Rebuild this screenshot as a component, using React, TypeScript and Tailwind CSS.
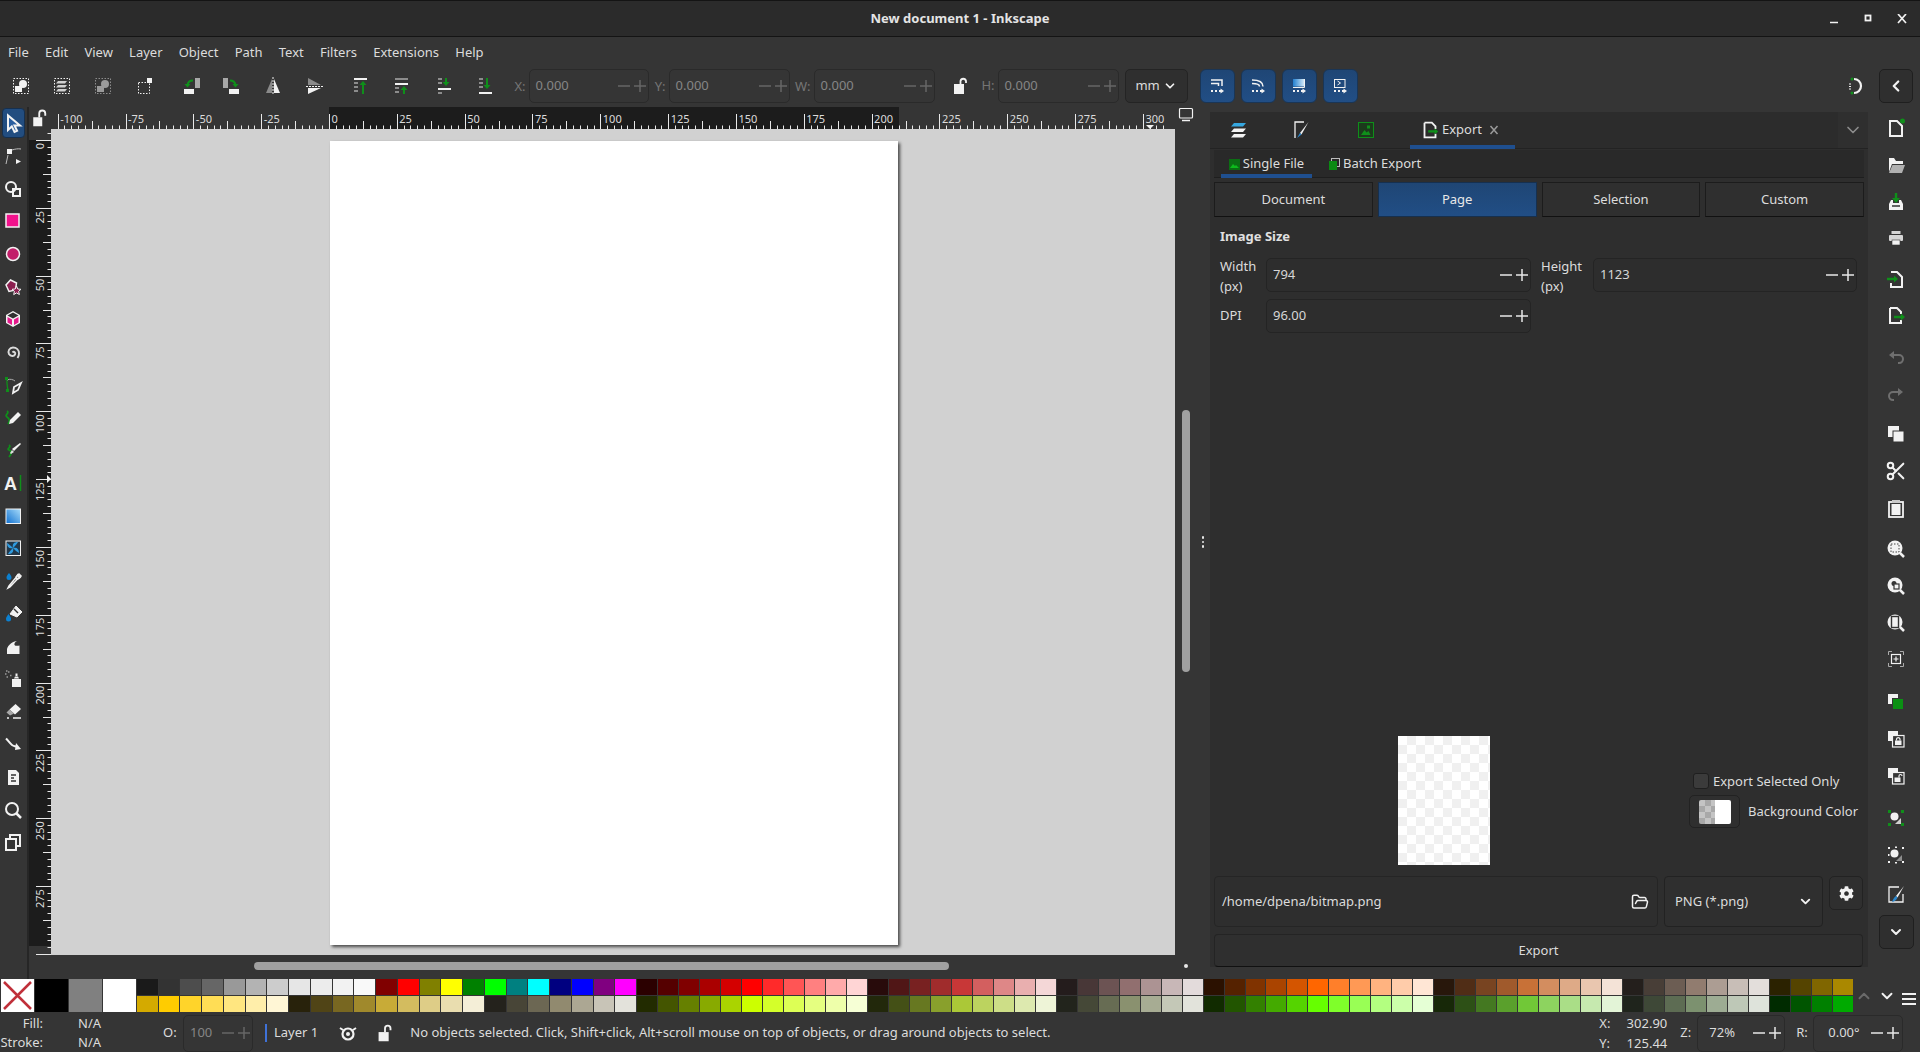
import type { ReactNode } from 'react';
import { ChevronDown, ChevronLeft, ChevronUp, FolderOpen, Scissors } from 'lucide-react';
import { FaCog } from 'react-icons/fa';

const G = '#0f8f1a';
const W = '#f2f2f2';

function Ico({ children, size = 24 }: { children: ReactNode; size?: number }) {
  return (
    <svg viewBox="0 0 24 24" width={size} height={size} className="shrink-0">
      {children}
    </svg>
  );
}

function Dotted({ x = 4.5, y = 4.5, w = 15, h = 15, c = W }: { x?: number; y?: number; w?: number; h?: number; c?: string }) {
  return <rect x={x} y={y} width={w} height={h} fill="none" stroke={c} strokeWidth="1" strokeDasharray="1.5 1.5" />;
}

function Doc({ c = W }: { c?: string }) {
  return <path d="M6 5h7l5 5v10H6z" fill="none" stroke={c} strokeWidth="2" strokeLinejoin="miter" />;
}

function Glass({ children }: { children?: ReactNode }) {
  return (
    <>
      <circle cx="11" cy="11" r="7.5" fill={W} />
      <path d="M16 16l4 4" stroke={W} strokeWidth="2.5" />
      {children}
    </>
  );
}

function SnapArrow() {
  return (
    <>
      <path d="M6 17h2M10 17h2M14 17h3" stroke={W} strokeWidth="2" />
      <path d="M15.500 14.500l3.500 2.500-3.500 2.500z" fill={W} />
    </>
  );
}

// top bar: selection and object commands
const commandIcons: { icon: ReactNode; cls: string }[] = [
  { cls: '', icon: <><Dotted /><circle cx="14" cy="10" r="4" fill={W} /><rect x="6" y="12" width="7" height="6" fill={W} /></> },
  { cls: '', icon: <><Dotted /><path d="M8 7h9l-2 2.5H6zM8 11h9l-2 2.5H6zM8 15h9l-2 2.5H6z" fill="#cfcfcf" /></> },
  { cls: '', icon: <><Dotted c="#8c8c8c" /><circle cx="14" cy="10" r="4" fill="#9a9a9a" /><rect x="6" y="12" width="7" height="6" fill="#9a9a9a" /></> },
  { cls: '', icon: <><Dotted x={5.5} y={8.5} w={11} h={11} /><rect x="14" y="4" width="5" height="5" fill={W} /></> },
  { cls: 'ml-[5px]', icon: <><rect x="5" y="15" width="10" height="5" fill={W} /><rect x="16" y="4" width="5" height="10" fill="#a8a8a8" /><path d="M14 6.500c-3 0-5 1.500-5.500 4.500" fill="none" stroke={G} strokeWidth="2" /><path d="M5.500 10h6l-3 3.500z" fill={G} /></> },
  { cls: '', icon: <><rect x="9" y="15" width="10" height="5" fill={W} /><rect x="3" y="4" width="5" height="10" fill="#a8a8a8" /><path d="M10 6.500c3 0 5 1.500 5.500 4.500" fill="none" stroke={G} strokeWidth="2" /><path d="M12.500 10h6l-3 3.500z" fill={G} /></> },
  { cls: '', icon: <><path d="M11 5v14H5z" fill="#8a8a8a" /><path d="M13 5v14h6z" fill={W} /><path d="M12 3v18" stroke={W} strokeWidth="1" strokeDasharray="2 1" /></> },
  { cls: '', icon: <><path d="M5 4l13 7H5z" fill="#8a8a8a" /><path d="M5 14h13L5 20z" fill={W} /><path d="M3 12.5h18" stroke={W} strokeWidth="1" strokeDasharray="2 1" /></> },
  { cls: 'ml-[5px]', icon: <><rect x="5" y="4" width="13" height="2" fill={W} /><path d="M5 9h4M5 13h4M5 17h4" stroke="#8c8c8c" strokeWidth="2" /><path d="M14 20V10" stroke={G} strokeWidth="2" /><path d="M10.5 11L14 7l3.5 4z" fill={G} /></> },
  { cls: '', icon: <><path d="M5 5h13M5 14h4M5 18h4" stroke="#8c8c8c" strokeWidth="2" /><rect x="5" y="9" width="13" height="2" fill={W} /><path d="M14 20v-5" stroke={G} strokeWidth="2" /><path d="M10.5 16l3.5-4 3.5 4z" fill={G} /></> },
  { cls: '', icon: <><path d="M6 5h4M6 9h4M6 19h4" stroke="#8c8c8c" strokeWidth="2" /><rect x="6" y="14" width="13" height="2" fill={W} /><path d="M14 4v5" stroke={G} strokeWidth="2" /><path d="M10.5 8l3.5 4 3.5-4z" fill={G} /></> },
  { cls: '', icon: <><path d="M6 5h4M6 9h4M6 13h4" stroke="#8c8c8c" strokeWidth="2" /><rect x="6" y="18" width="13" height="2" fill={W} /><path d="M14 4v8" stroke={G} strokeWidth="2" /><path d="M10.5 11l3.5 4 3.5-4z" fill={G} /></> },
];

const snapIcons: ReactNode[] = [
  <><path d="M6 6h11v6" fill="none" stroke={W} strokeWidth="1.500" /><path d="M6 9.500h7.500V12" fill="none" stroke={W} strokeWidth="1.500" /><SnapArrow /></>,
  <><path d="M6 6c6 0 11 1 11 6.500" fill="none" stroke={W} strokeWidth="1.500" /><path d="M6 9.500c4 0 7.500.5 7.500 3" fill="none" stroke={W} strokeWidth="1.500" /><SnapArrow /></>,
  <><defs><linearGradient id="snapfill" x1="0" y1="0" x2="1" y2="0"><stop offset="0" stopColor="#2280d0" /><stop offset="1" stopColor="#cfe6f7" /></linearGradient></defs><rect x="6" y="5" width="11" height="7.500" fill="url(#snapfill)" /><path d="M6 13.500h11.500V5" fill="none" stroke={W} strokeWidth="1" /><SnapArrow /></>,
  <><rect x="6.500" y="5.500" width="10.500" height="8" fill="none" stroke={W} strokeWidth="1" /><path d="M9.500 7l3 2-3 2" fill="none" stroke={W} strokeWidth="1" /><SnapArrow /></>,
];

const toolIcons: ReactNode[] = [
  <path d="M7 4.500V19l3.800-3.600L13.500 21l2.600-1.200-2.600-5.300H19z" fill="#2a5e9f" stroke={W} strokeWidth="2" />,
  <><rect x="6" y="5" width="5" height="5" fill={W} /><path d="M11 6c3-1 6-1.500 9-1M7 11l-2 9" fill="none" stroke="#bdbdbd" strokeWidth="1" /><path d="M15 15l5 2.500-5 2.500z" fill={W} /></>,
  <><circle cx="10" cy="10" r="5" fill="none" stroke={W} strokeWidth="2" /><rect x="12" y="12" width="7" height="7" fill="none" stroke={W} strokeWidth="2" /></>,
  <rect x="5" y="5" width="13" height="13" fill="#f2128c" stroke={W} strokeWidth="1.500" />,
  <circle cx="12" cy="12" r="6.500" fill="#c21f6a" stroke={W} strokeWidth="1.500" />,
  <><path d="M9.500 5l6 3-1 7-6.500 1.500L5 10z" fill="#8c1f50" stroke={W} strokeWidth="1.500" /><path d="M15.500 11l1.300 3 3.200.300-2.400 2.100.800 3.100-2.900-1.600-2.800 1.700.700-3.200-2.400-2.100 3.200-.300z" fill="#8c1f50" stroke={W} strokeWidth="1" /></>,
  <><path d="M12 4l7 4v8l-7 4-7-4V8z" fill={W} /><path d="M12 5.500L17.500 8.500 12 11.500 6.500 8.500z" fill="#303030" /><path d="M6.500 10l4.500 2.500v5.500l-4.500-2.500z" fill="#e6198c" /><path d="M17.500 10L13 12.500v5.500l4.500-2.500z" fill="#e6198c" /></>,
  <path d="M11.500 12.500c1.500-1.500 3.500 0 2.500 2-1 2-4.500 2-6-.500-1.500-3 .5-6.500 4-6.500 3.500 0 6 2.500 6 6 0 2-.5 3-1.500 4.500" fill="none" stroke="#dcdcdc" strokeWidth="1.900" />,
  <><path d="M6 6c-.5 4 .5 8 1 12" fill="none" stroke={G} strokeWidth="1.300" /><path d="M6 7c3-1.500 6-.5 8 1" fill="none" stroke="#aaa" strokeWidth="1" /><rect x="4" y="4" width="3" height="3" fill={G} /><rect x="5" y="16" width="3" height="3" fill={G} /><path d="M20 10l-3 7-5 3 1-6z" fill="none" stroke={W} strokeWidth="1.800" /></>,
  <><path d="M6 5c3 2-3 4 0 6s3 4 1 7" fill="none" stroke={G} strokeWidth="1.800" /><path d="M17 6l3 3-8 8-4 1 1-4z" fill={W} /></>,
  <><path d="M8 7c3 2-3 4 0 5s3 3 0 7" fill="none" stroke={G} strokeWidth="1.800" /><path d="M19 5l1 1-7 7-2-2z" fill={W} /><path d="M11 12l2 2-3 2-1-1z" fill="#ddd" /></>,
  <><text x="3" y="19" fontFamily="'Liberation Sans', sans-serif" fontWeight="700" fontSize="18" fill={W}>A</text><path d="M19.500 4v16" stroke={G} strokeWidth="1.500" /></>,
  <><defs><linearGradient id="grad1" x1="0" y1="1" x2="1" y2="0"><stop offset="0" stopColor="#0e6fd0" /><stop offset="1" stopColor="#a8dcfa" /></linearGradient></defs><rect x="5" y="5" width="14.500" height="14.500" fill="url(#grad1)" stroke={W} strokeWidth="1" /></>,
  <><rect x="5" y="5" width="14.500" height="14.500" fill="#22384a" stroke={W} strokeWidth="1" /><path d="M12 12c-1-4 1-6 5-6-1 2-3 4-5 6zM12 12c4-1 6 1 6 5-2-1-4-3-6-5zM12 12c1 4-1 6-5 6 1-2 3-4 5-6zM12 12c-4 1-6-1-6-5 2 1 4 3 6 5z" fill="#2f9bdf" /></>,
  <><path d="M8 4c-1.500 2-2.500 3-2.500 4.500a2.500 2.500 0 0 0 5 0C10.500 7 9.500 6 8 4z" fill="#0c80d0" /><path d="M18 5l2 2-3 3-2-2zM14.500 9l1.500 1.500-7 7.500-2 1 1-2z" fill="none" stroke={W} strokeWidth="1.500" /><path d="M16 5.500l3.500 3.500" stroke={W} strokeWidth="2.500" /></>,
  <><path d="M15 4l6 6-5 5-7-3z" fill={W} stroke={W} strokeWidth="1" /><path d="M13 7l4 4" stroke="#333" strokeWidth="1.500" /><path d="M7.500 12c-1.500 2-2.500 3.500-2.500 5a2.500 2.500 0 0 0 5 0c0-1.500-1-3-2.500-5z" fill="#0c80d0" /></>,
  <path d="M6 20v-5c1-4 6-8 10-8-2 1-3 2.500-2.500 4 .5 1 3 1 5 .5V20z" fill={W} />,
  <><rect x="11" y="12" width="9" height="8" fill={W} /><path d="M13 11.500h5l-1-2h-3zM14.500 9V6.500h2V9z" fill={W} /><path d="M4 7h1.500M7 5h1.500M5.500 10h1.500M9 8.500h1.500M5 4h1.500" stroke="#9a9a9a" strokeWidth="1.500" /></>,
  <><path d="M14.500 4l5.500 5-6 5.500-5.500-5z" fill={W} /><path d="M8.500 9.500l-3 3 3.500 3 4-2z" fill="#a8a8a8" /><path d="M6 18h2M12 18h8" stroke={W} strokeWidth="1.500" /></>,
  <><path d="M5 6.500c2 2 4 5 6 6.500 2 1.500 3 1 5 2" fill="none" stroke={W} strokeWidth="2" /><path d="M15 11l5 6-6 1z" fill={W} /></>,
  <><path d="M7 5h8l3 3v12H7z" fill={W} /><path d="M10 10h5M10 13h3M10 16h5" stroke="#333" strokeWidth="1.300" /></>,
  <><circle cx="11" cy="11" r="6" fill="none" stroke={W} strokeWidth="2" /><path d="M15.500 15.500l4.500 4.500" stroke={W} strokeWidth="2.500" /></>,
  <><rect x="5" y="9" width="10" height="11" fill="none" stroke={W} strokeWidth="2" /><path d="M9 8V5h10v11h-3" fill="none" stroke={W} strokeWidth="2" /></>,
];

const actionIcons: { icon: ReactNode; cls: string }[] = [
  { cls: '', icon: <><Doc /><circle cx="18.500" cy="5" r="2.500" fill={G} /></> },
  { cls: '', icon: <><path d="M5 19V5h5l2 3h7v3H8l-3 8z" fill={W} /><path d="M8.500 12H21l-3 8H5z" fill={W} opacity=".65" /></> },
  { cls: '', icon: <><path d="M5 14l2-4h2v3h6v-3h2l2 4v6H5z" fill={W} /><path d="M8 16h8" stroke="#333" strokeWidth="1.500" /><path d="M12 3v7" stroke={G} strokeWidth="2.500" /><path d="M8 8h8l-4 5z" fill={G} /></> },
  { cls: '', icon: <><rect x="7.500" y="5" width="9" height="3" fill="#d6d6d6" /><rect x="5" y="9" width="14" height="6" rx="1" fill="#d6d6d6" /><rect x="8" y="14" width="8" height="5" fill={W} stroke="#333" strokeWidth=".6" /></> },
  { cls: 'mt-[3.500px]', icon: <><path d="M7 5h6l5 5v10H7v-4" fill="none" stroke={W} strokeWidth="2" /><path d="M3 12h8" stroke={G} strokeWidth="2.500" /><path d="M10 8.500l4 3.500-4 3.500z" fill={G} /></> },
  { cls: '', icon: <><path d="M6 5h7l4 4v2M17 17v3H6V5" fill="none" stroke={W} strokeWidth="2" /><path d="M10 14h8" stroke={G} strokeWidth="2.500" /><path d="M17 10.500l4 3.500-4 3.500z" fill={G} /></> },
  { cls: 'mt-[5px]', icon: <><path d="M9 10h6a4 4 0 0 1 4 4c0 2-1.500 4-4 4h-1" fill="none" stroke="#6f6f6f" strokeWidth="2" /><path d="M10 6v8l-5-4z" fill="#6f6f6f" /></> },
  { cls: '', icon: <><path d="M15 10H9a4 4 0 0 0-4 4c0 2 1.500 4 4 4h1" fill="none" stroke="#6f6f6f" strokeWidth="2" /><path d="M14 6v8l5-4z" fill="#6f6f6f" /></> },
  { cls: 'mt-[4px]', icon: <><rect x="4" y="4" width="11" height="11" fill={W} /><rect x="9" y="9" width="11" height="11" fill={W} stroke="#353535" strokeWidth="1" /></> },
  { cls: '', icon: <Scissors size={22} x={1} y={1} color={W} strokeWidth={2.2} /> },
  { cls: '', icon: <><rect x="5" y="6" width="14" height="15" fill="none" stroke={W} strokeWidth="1.800" /><rect x="7.500" y="8" width="9" height="11" fill={W} /><rect x="8" y="4" width="8" height="3" fill="#c8c8c8" /></> },
  { cls: 'mt-[5px]', icon: <Glass><rect x="7" y="7" width="8" height="8" fill="none" stroke="#444" strokeDasharray="1.500 1.500" strokeWidth="1" /></Glass> },
  { cls: '', icon: <Glass><circle cx="10" cy="9.500" r="2.500" fill="#353535" /><rect x="10" y="10" width="5" height="5" fill={W} stroke="#353535" strokeWidth="1.200" /></Glass> },
  { cls: '', icon: <Glass><rect x="7.500" y="5.500" width="7" height="11" fill="none" stroke="#353535" strokeWidth="1.400" /></Glass> },
  { cls: '', icon: <><path d="M4.500 8V4.500H8M16 4.500h3.500V8M19.500 16v3.500H16M8 19.500H4.500V16" fill="none" stroke="#aaa" strokeWidth="1" /><rect x="7.500" y="7.500" width="9" height="9" fill="none" stroke={W} strokeWidth="1.200" /><path d="M12 9.500v5M9.500 12h5" stroke={W} strokeWidth="1.200" /></> },
  { cls: 'mt-[6px]', icon: <><rect x="4" y="4" width="10" height="10" fill={W} /><rect x="8.500" y="8.500" width="11" height="11" fill="#0b9013" stroke="#353535" strokeWidth="1" /></> },
  { cls: '', icon: <><rect x="4" y="4" width="10" height="10" fill={W} /><rect x="8.500" y="8.500" width="11.500" height="11.500" fill="#353535" stroke={W} strokeWidth="1.200" /><rect x="11" y="13.500" width="6.500" height="4.500" fill={W} /><path d="M12.500 13.500v-1.500a1.800 1.800 0 0 1 3.500 0v1.500" fill="none" stroke={W} strokeWidth="1.200" /></> },
  { cls: '', icon: <><rect x="4" y="4" width="10" height="10" fill={W} /><rect x="8.500" y="8.500" width="11.500" height="11.500" fill="#353535" stroke={W} strokeWidth="1.200" /><rect x="10.500" y="13.500" width="6" height="4.500" fill={W} /><path d="M15 13.500v-1.500a1.500 1.500 0 0 1 3 0" fill="none" stroke={W} strokeWidth="1.200" /></> },
  { cls: 'mt-[6px]', icon: <><path d="M4 4h3v3H4zM17 4h3v3h-3zM4 17h3v3H4zM17 17h3v3h-3z" fill={G} /><circle cx="10.500" cy="10.500" r="4" fill={W} /><path d="M11 18l6-6v6z" fill="#cfcfcf" /></> },
  { cls: '', icon: <><path d="M4 4h2v2H4zM18 4h2v2h-2zM4 18h2v2H4zM18 18h2v2h-2zM11 3.500h2v1.500h-2zM4 11h1.500v2H4zM11 19h2v1.500h-2z" fill={W} /><circle cx="10.500" cy="10.500" r="4" fill={W} /><path d="M12 18l6-6v6z" fill="#8e8e8e" /></> },
  { cls: 'mt-[2px]', icon: <><path d="M15 5H5v15h14v-8" fill="none" stroke={W} strokeWidth="1.300" /><path d="M20 4l-8 10 1.500 1.500z" fill={W} /><path d="M12 14c-1.500 1-3 3-4 6 2.500-.5 4.500-2 5.500-4.500z" fill="#2a88cf" /></> },
];

const paletteTop = ['#1a1a1a','#333333','#4d4d4d','#666666','#999999','#b3b3b3','#cccccc','#e6e6e6','#ececec','#f2f2f2','#f9f9f9','#800000','#ff0000','#808000','#ffff00','#008000','#00ff00','#008080','#00ffff','#000080','#0000ff','#800080','#ff00ff','#2b0000','#550000','#800000','#aa0000','#d40000','#ff0000','#ff2a2a','#ff5555','#ff8080','#ffaaaa','#ffd5d5','#280b0b','#501616','#782121','#a02c2c','#c83737','#d35f5f','#de8787','#e9afaf','#f4d7d7','#241c1c','#483737','#6c5353','#916f6f','#ac9393','#c8b7b7','#e3dbdb','#2b1100','#552200','#803300','#aa4400','#d45500','#ff6600','#ff7f2a','#ff9955','#ffb380','#ffccaa','#ffe6d5','#28170b','#502d16','#784421','#a05a2c','#c87137','#d38d5f','#deaa87','#e9c6af','#f4e3d7','#241f1c','#483e37','#6c5d53','#917c6f','#ac9d93','#c8beb7','#e3dedb','#2b2200','#554400','#806600','#aa8800'];
const paletteBottom = ['#d4aa00','#ffcc00','#ffd42a','#ffdd55','#ffe680','#ffeeaa','#fff6d5','#28220b','#504416','#786721','#a0892c','#c8ab37','#d3bc5f','#decd87','#e9ddaf','#f4eed7','#24221c','#484537','#6c6753','#918a6f','#aca793','#c8c4b7','#e3e2db','#222b00','#445500','#668000','#88aa00','#aad400','#ccff00','#d4ff2a','#ddff55','#e5ff80','#eeffaa','#f6ffd5','#22280b','#445016','#677821','#89a02c','#abc837','#bcd35f','#cdde87','#dde9af','#eef4d7','#22241c','#454837','#676c53','#8a916f','#a7ac93','#c4c8b7','#e2e3db','#112b00','#225500','#338000','#44aa00','#55d400','#66ff00','#7fff2a','#99ff55','#b3ff80','#ccffaa','#e5ffd5','#172808','#2d5016','#447821','#5aa02c','#71c837','#8dd35f','#aade87','#c6e9af','#e3f4d7','#1f241c','#3e4837','#5d6c53','#7c916f','#9dac93','#bec8b7','#dee3db','#002b00','#005500','#008000','#00aa00'];

const menus = ['File', 'Edit', 'View', 'Layer', 'Object', 'Path', 'Text', 'Filters', 'Extensions', 'Help'];

function PlusMinus({ dim = false }: { dim?: boolean }) {
  const c = dim ? '#666666' : '#e8e8e8';
  return (
    <svg width="30" height="14" viewBox="0 0 30 14" className="shrink-0">
      <path d="M1 7h12M17 7h12M23 1v12" stroke={c} strokeWidth="1.500" />
    </svg>
  );
}

function Spin({ value, className, dim = false }: { value: string; className: string; dim?: boolean }) {
  return (
    <div className={`flex items-center justify-between rounded-[5px] border pl-[6px] pr-[1px] ${dim ? 'border-[#2a2a2a] text-[#858585]' : 'border-[#242424] bg-[#2d2d2d] text-[#d6d6d6]'} ${className}`}>
      <span>{value}</span>
      <PlusMinus dim={dim} />
    </div>
  );
}

function BarLabel({ text, className }: { text: string; className: string }) {
  return <div className={`pr-[3px] text-right text-[#757575] ${className}`}>{text}</div>;
}

function HRuler() {
  const at = (v: number) => 329 + v * 2.713 - 51;
  const ticks: ReactNode[] = [];
  for (let v = -100; v <= 307.5; v += 2.5) {
    const len = v % 25 === 0 ? 15 : v % 12.5 === 0 ? 8 : 3.5;
    ticks.push(<path key={v} d={`M${Math.round(at(v)) + 0.5} 22v-${len}`} stroke="#e8e8e8" strokeWidth="1" />);
  }
  const labels = [];
  for (let v = -100; v <= 300; v += 25) labels.push(v);
  return (
    <svg width="1124" height="22" className="block shrink-0">
      <rect x="0" y="0" width="1124" height="22" fill="#353535" />
      <rect x="278" y="0" width="570" height="22" fill="#1c1c1c" />
      {ticks}
      {labels.map((v) => (
        <text key={v} x={at(v) + 2.500} y="16" fontSize="11" fill="#dcdcdc" fontFamily="'Noto Sans', sans-serif">{v}</text>
      ))}
      <path d="M1095 18h8l-4 4z" fill={W} />
    </svg>
  );
}

function VRuler() {
  const at = (v: number) => 11 + v * 2.713;
  const ticks: ReactNode[] = [];
  for (let v = -2.5; v <= 302.5; v += 2.5) {
    const len = v % 25 === 0 ? 15 : v % 12.5 === 0 ? 8 : 3.5;
    ticks.push(<path key={v} d={`M22 ${Math.round(at(v)) + 0.5}h-${len}`} stroke="#e8e8e8" strokeWidth="1" />);
  }
  const labels = [];
  for (let v = 0; v <= 300; v += 25) labels.push(v);
  return (
    <svg width="22" height="826" className="block shrink-0">
      <rect x="0" y="0" width="22" height="826" fill="#353535" />
      <rect x="0" y="11" width="22" height="806" fill="#1c1c1c" />
      {ticks}
      {labels.map((v) => (
        <text key={v} x="15" y={at(v) + 3} fontSize="11" fill="#dcdcdc" textAnchor="end" transform={`rotate(-90 15 ${at(v) + 3})`} fontFamily="'Noto Sans', sans-serif">{v}</text>
      ))}
      <path d="M18 346l4 4-4 4z" fill={W} />
    </svg>
  );
}

export default function App() {
  return (
    <div className="flex h-[1052px] w-[1920px] flex-col overflow-hidden bg-[#353535] text-[13px] text-[#dcdcdc] font-['Noto_Sans',sans-serif]">
      {/* title bar */}
      <div className="relative flex h-[37px] shrink-0 items-center justify-center border-y border-[#141414] bg-[#2b2b2b]">
        <span className="text-[13px] font-bold text-[#e4e4e4]">New document 1 - Inkscape</span>
        <div className="absolute right-[13px] top-[13px] flex items-start gap-[24px]">
          <svg width="10" height="10"><path d="M1 8.500h8" stroke={W} strokeWidth="1.500" /></svg>
          <svg width="10" height="10"><rect x="2.500" y="1.500" width="5" height="5" fill="none" stroke={W} strokeWidth="1.800" /></svg>
          <svg width="10" height="10"><path d="M1 0l8 9M9 0L1 9" stroke={W} strokeWidth="1.700" /></svg>
        </div>
      </div>

      {/* menu */}
      <div className="flex h-[31px] shrink-0 items-center gap-[16.200px] pl-[8px] pt-[1px]">
        {menus.map((m) => (
          <span key={m}>{m}</span>
        ))}
      </div>

      {/* command bar */}
      <div className="flex h-[39px] shrink-0 items-start pt-[1px]">
        {commandIcons.map((c, i) => (
          <div key={i} className={`flex h-[34px] w-[41.300px] items-center justify-center ${c.cls}`}>
            <Ico>{c.icon}</Ico>
          </div>
        ))}
        <BarLabel text="X:" className="h-[34px] w-[23px] leading-[34px]" />
        <Spin value="0.000" dim className="h-[34px] w-[120px]" />
        <BarLabel text="Y:" className="h-[34px] w-[20px] leading-[34px]" />
        <Spin value="0.000" dim className="h-[34px] w-[121px]" />
        <BarLabel text="W:" className="h-[34px] w-[24px] leading-[34px]" />
        <Spin value="0.000" dim className="h-[34px] w-[121px]" />
        <div className="flex h-[34px] w-[63px] items-center justify-between pl-[13px]">
          <svg width="24" height="24" viewBox="0 0 24 24">
            <rect x="6" y="10" width="10" height="10" fill={W} />
            <path d="M12.500 10V7a2.800 2.800 0 0 1 5.500 0v2" fill="none" stroke={W} strokeWidth="1.800" />
          </svg>
          <span className="pr-[3px] text-[#757575]">H:</span>
        </div>
        <Spin value="0.000" dim className="h-[34px] w-[121px]" />
        <div className="ml-[6px] flex h-[34px] w-[63px] items-center justify-center gap-[3px] rounded-[5px] border border-[#242424] bg-[#2f2f2f]">
          mm <ChevronDown size={14} strokeWidth={3} color={W} />
        </div>
        <div className="ml-[12px] flex gap-[6px]">
          {snapIcons.map((s, i) => (
            <div key={i} className="flex h-[34px] w-[35px] items-center justify-center rounded-[6px] border border-[#1a3555] bg-gradient-to-b from-[#1f4675] to-[#214e85]">
              <Ico>{s}</Ico>
            </div>
          ))}
        </div>
        <div className="flex h-[34px] flex-1 items-center justify-end pr-[13px]">
          <svg width="24" height="24" viewBox="0 0 24 24">
            <path d="M12 5a7 7 0 0 1 0 14" fill="none" stroke={W} strokeWidth="2.200" />
            <circle cx="10" cy="5" r="1.500" fill={G} />
            <circle cx="10" cy="19" r="1.500" fill={G} />
            <path d="M7 10h2M7 12.500h2M7 15h2" stroke={W} strokeWidth="1" />
          </svg>
        </div>
        <div className="mr-[7px] flex h-[34px] w-[34px] items-center justify-center rounded-[5px] border border-[#1f1f1f] bg-[#2f2f2f]">
          <ChevronLeft size={18} strokeWidth={3} color={W} />
        </div>
      </div>

      {/* body */}
      <div className="flex min-h-0 flex-1">
        {/* tool column */}
        <div className="w-[29px] shrink-0 border-r-2 border-[#262626] bg-[#353535] pr-[1px]">
          {toolIcons.map((t, i) => (
            <div key={i} className="flex h-[32.700px] items-center justify-center">
              {i === 0 ? (
                <div className="flex h-[30px] w-[23px] items-center justify-center rounded-[4px] border border-[#16304f] bg-[#224d80]">
                  <Ico>{t}</Ico>
                </div>
              ) : (
                <Ico>{t}</Ico>
              )}
            </div>
          ))}
        </div>

        {/* canvas column */}
        <div className="flex w-[1181px] shrink-0 flex-col">
          <div className="flex h-[22px]">
            <div className="flex w-[22px] items-center justify-center">
              <svg width="18" height="18" viewBox="0 0 24 24">
                <rect x="3" y="11" width="12" height="12" fill={W} />
                <path d="M11 11V6a4 4 0 0 1 8 0v3" fill="none" stroke={W} strokeWidth="2.500" />
              </svg>
            </div>
            <HRuler />
            <div className="flex w-[21px] justify-center">
              <svg width="16" height="16" viewBox="0 0 16 16">
                <rect x="1.500" y="1.500" width="13" height="9.500" rx="1" fill="none" stroke={W} strokeWidth="1.200" />
                <path d="M4 13.500h8" stroke={W} strokeWidth="1.500" />
              </svg>
            </div>
          </div>
          <div className="flex h-[826px]">
            <VRuler />
            <div className="h-[826px] w-[1124px] bg-[#d1d1d1] pl-[279px] pt-[12px]">
              <div className="h-[804px] w-[568px] bg-white shadow-[2px_2px_3px_rgba(0,0,0,0.65)]" />
            </div>
            <div className="flex w-[21px] justify-center pl-[1px] pt-[281px]">
              <div className="h-[262px] w-[8px] rounded-full bg-[#a0a0a0]" />
            </div>
            <div className="flex w-[14px] flex-col items-center gap-[2px] pt-[407px]">
              <span className="h-[2.500px] w-[2.500px] rounded-full bg-[#e8e8e8]" />
              <span className="h-[2.500px] w-[2.500px] rounded-full bg-[#e8e8e8]" />
              <span className="h-[2.500px] w-[2.500px] rounded-full bg-[#e8e8e8]" />
            </div>
          </div>
          <div className="flex items-center pt-[7px]">
            <div className="ml-[225px] h-[8px] w-[695px] rounded-full bg-[#a0a0a0]" />
            <div className="ml-[235px] h-[4px] w-[4px] rounded-full bg-[#e8e8e8]" />
          </div>
        </div>

        {/* dock */}
        <div className="mt-[5px] flex h-[855px] w-[658px] shrink-0 flex-col bg-[#2e2e2e]">
          <div className="flex h-[37px] shrink-0 border-b border-[#232323] bg-[#2c2c2c]">
            <div className="flex w-[57px] items-center justify-center">
              <svg width="20" height="20" viewBox="0 0 20 20">
                <path d="M5 3h12l-3 3.500H2z" fill="#35a7e0" />
                <path d="M5 8.500h12l-3 3.500H2z" fill={W} />
                <path d="M5 14h12l-3 3.500H2z" fill={W} />
              </svg>
            </div>
            <div className="flex w-[62px] items-center justify-center pl-[8px]">
              <svg width="20" height="20" viewBox="0 0 20 20">
                <path d="M12 2H3v16" fill="none" stroke={W} strokeWidth="1.300" />
                <path d="M16.500 2L8 13l1.500 1.500z" fill={W} />
                <path d="M8 13l-3 5 4.500-3.500z" fill="#2a88cf" />
              </svg>
            </div>
            <div className="flex w-[72px] items-center justify-center pl-[2px]">
              <svg width="16" height="16" viewBox="0 0 16 16">
                <rect x=".500" y=".500" width="15" height="15" fill="#1c3a1c" stroke={G} />
                <path d="M3 13l3.500-5 2 2.500 2-1.500 2 4z" fill={G} />
                <rect x="9" y="3.500" width="3" height="3" fill={G} />
              </svg>
            </div>
            <div className="relative ml-[9px] flex w-[105px] items-center pl-[9px]">
              <Ico size={22}>
                <path d="M6 4h8l4 4v3M18 16v4H6V4" fill="none" stroke={W} strokeWidth="2" />
                <path d="M10 13.500h8" stroke={G} strokeWidth="2.500" />
                <path d="M17 10l4 3.500-4 3.500z" fill={G} />
              </Ico>
              <span className="ml-[1px]">Export</span>
              <span className="ml-[7px]">
                <svg width="10" height="10"><path d="M1.500 1l7 8M8.500 1l-7 8" stroke="#9b9b9b" strokeWidth="1.500" /></svg>
              </span>
              <div className="absolute bottom-[-1px] left-0 right-0 h-[4px] bg-[#1f4f8f]" />
            </div>
            <div className="ml-auto flex w-[30px] items-center justify-center bg-[#2f2f2f]">
              <ChevronDown size={20} color="#8c8c8c" strokeWidth={2} />
            </div>
          </div>

          <div className="mx-[4px] mt-[1px] flex h-[28px] shrink-0 border-b border-[#1e1e1e] bg-[#292929] pl-[7px] pt-[1px]">
            <div className="relative flex w-[91px] items-center justify-center gap-[3px]">
              <svg width="11" height="11" viewBox="0 0 11 11"><rect width="11" height="11" fill="#0b6e13" /><path d="M1 9l3-4 2 2 1-1 3 3z" fill="#0dbb1c" /></svg>
              <span>Single File</span>
              <div className="absolute bottom-[-1px] left-0 right-0 h-[4px] bg-[#1f4f8f]" />
            </div>
            <div className="ml-[17px] flex items-center gap-[3px]">
              <svg width="11" height="12" viewBox="0 0 11 12"><rect x="2.500" y=".500" width="8" height="8" fill="none" stroke="#bbb" /><rect y="3" width="8" height="9" fill="#0b8a13" /></svg>
              <span>Batch Export</span>
            </div>
          </div>

          <div className="mx-[4px] mt-[4px] grid h-[35px] w-[650px] shrink-0 grid-cols-4 gap-[5px]">
            <div className="flex items-center justify-center border border-[#1c1c1c] border-b-[#111] bg-[#2f2f2f]">Document</div>
            <div className="flex items-center justify-center border border-[#16304f] bg-gradient-to-b from-[#1f4675] to-[#214e85] text-[#e8e8e8]">Page</div>
            <div className="flex items-center justify-center border border-[#1c1c1c] border-b-[#111] bg-[#2f2f2f]">Selection</div>
            <div className="flex items-center justify-center border border-[#1c1c1c] border-b-[#111] bg-[#2f2f2f]">Custom</div>
          </div>

          <div className="mt-[10px] shrink-0 pl-[10px] font-bold leading-[18px] text-[#e0e0e0]">Image Size</div>

          <div className="mt-[13px] flex h-[34px] shrink-0 pl-[10px]">
            <div className="mt-[-2px] w-[46px] leading-[20px]">Width<br />(px)</div>
            <Spin value="794" className="h-[34px] w-[265px]" />
            <div className="ml-[10px] mt-[-2px] w-[52px] leading-[20px]">Height<br />(px)</div>
            <Spin value="1123" className="h-[34px] w-[264px]" />
          </div>
          <div className="mt-[7px] flex shrink-0 items-center pl-[10px]">
            <div className="w-[46px]">DPI</div>
            <Spin value="96.00" className="h-[34px] w-[265px]" />
          </div>

          <div className="flex-1" />

          <div className="flex shrink-0 items-end">
            <div className="ml-[188px] h-[129px] w-[92px] bg-[repeating-conic-gradient(#f0f0f0_0_25%,#ffffff_0_50%)] bg-[length:18px_18px]" />
            <div className="mb-[37px] ml-auto mr-[11px] flex w-[168px] flex-col items-start">
              <div className="ml-[4px] flex items-center gap-[4px]">
                <div className="h-[16px] w-[16px] rounded-[3px] border border-[#1f1f1f] bg-[#3b3b3b]" />
                <span className="whitespace-nowrap">Export Selected Only</span>
              </div>
              <div className="mt-[4px] flex items-center gap-[8px]">
                <div className="flex h-[33px] w-[51px] shrink-0 items-center justify-center rounded-[5px] border border-[#222] bg-[#2f2f2f]">
                  <div className="flex h-[24px] w-[32px] overflow-hidden rounded-[2px]">
                    <div className="h-full w-1/2 bg-[repeating-conic-gradient(#a8a8a8_0_25%,#c4c4c4_0_50%)] bg-[length:12px_12px]" />
                    <div className="h-full w-1/2 bg-white" />
                  </div>
                </div>
                <span className="whitespace-nowrap">Background Color</span>
              </div>
            </div>
          </div>

          <div className="mt-[11px] flex shrink-0 gap-[6px] pl-[4px]">
            <div className="flex h-[51px] w-[444px] items-center justify-between rounded-[4px] border border-[#252525] pl-[7px] pr-[8px]">
              <span>/home/dpena/bitmap.png</span>
              <FolderOpen size={18} color={W} strokeWidth={2} />
            </div>
            <div className="flex h-[51px] w-[159px] items-center justify-between rounded-[4px] border border-[#222] bg-[#2f2f2f] pl-[10px] pr-[9px]">
              <span>PNG (*.png)</span>
              <ChevronDown size={15} color={W} strokeWidth={3} />
            </div>
            <div className="flex h-[34px] w-[34px] items-center justify-center rounded-[5px] border border-[#222] bg-[#2f2f2f]">
              <FaCog size={15} color={W} />
            </div>
          </div>

          <div className="ml-[4px] mt-[7px] flex h-[33px] w-[649px] shrink-0 items-center justify-center rounded-[4px] border border-[#242424] border-b-[#111] bg-[#2f2f2f]">
            Export
          </div>
        </div>

        {/* action column */}
        <div className="flex w-[52px] shrink-0 flex-col items-center pl-[4px] pt-[3px]">
          {actionIcons.map((a, i) => (
            <div key={i} className={`flex h-[36.700px] shrink-0 items-center justify-center ${a.cls}`}>
              <Ico>{a.icon}</Ico>
            </div>
          ))}
          <div className="mt-[3px] flex h-[34px] w-[35px] shrink-0 items-center justify-center rounded-[5px] border border-[#1f1f1f] bg-[#2f2f2f]">
            <ChevronDown size={16} strokeWidth={3} color={W} />
          </div>
        </div>
      </div>

      {/* palette */}
      <div className="flex h-[33px] shrink-0 items-stretch pl-[1px]">
        <div className="flex gap-[1px]">
          <svg width="33" height="33" className="shrink-0">
            <rect width="33" height="33" fill="#ffffff" />
            <path d="M3 3l27 27M30 3L3 30" stroke="#c0303a" strokeWidth="2.500" />
          </svg>
          <div className="w-[33px] bg-black" />
          <div className="w-[33px] bg-[#808080]" />
          <div className="w-[33px] bg-white" />
        </div>
        <div className="ml-[1px] grid w-[499px] shrink-0 grid-cols-[repeat(23,1fr)] grid-rows-2 gap-[1px]">
          {paletteTop.slice(0, 23).map((c, i) => <div key={i} style={{ backgroundColor: c }} />)}
          {paletteBottom.slice(0, 23).map((c, i) => <div key={i} style={{ backgroundColor: c }} />)}
        </div>
        <div className="ml-[1px] grid w-[1216px] shrink-0 grid-cols-[repeat(58,1fr)] grid-rows-2 gap-[1px]">
          {paletteTop.slice(23).map((c, i) => <div key={i} style={{ backgroundColor: c }} />)}
          {paletteBottom.slice(23).map((c, i) => <div key={i} style={{ backgroundColor: c }} />)}
        </div>
        <div className="flex flex-1 items-center gap-[5px] pl-[2px]">
          <ChevronUp size={18} color="#6a6a6a" strokeWidth={2.500} />
          <ChevronDown size={18} color={W} strokeWidth={2.500} />
          <svg width="16" height="14" className="mt-[7px] shrink-0"><path d="M1 2h14M1 7h14M1 12h14" stroke={W} strokeWidth="1.800" /></svg>
        </div>
      </div>

      {/* status bar */}
      <div className="flex h-[40px] shrink-0 items-center pt-[2px]">
        <div className="w-[43px] text-right leading-[19px]">Fill:<br />Stroke:</div>
        <div className="ml-[35px] w-[85px] leading-[19px]">N/A<br />N/A</div>
        <div className="w-[20px]">O:</div>
        <Spin value="100" dim className="h-[37px] w-[70px]" />
        <div className="ml-[12px] h-[18px] w-[2px] bg-[#3f72d8]" />
        <span className="ml-[7px]">Layer 1</span>
        <svg width="20" height="20" viewBox="0 0 20 20" className="ml-[20px] shrink-0">
          <path d="M2 5l3 2M18 5l-3 2" stroke={W} strokeWidth="2" />
          <circle cx="10" cy="11" r="5.500" fill="none" stroke={W} strokeWidth="2.200" />
          <circle cx="10" cy="11" r="2" fill={W} />
        </svg>
        <svg width="22" height="22" viewBox="0 0 24 24" className="ml-[16px] shrink-0">
          <rect x="5" y="11" width="11" height="10" fill={W} />
          <path d="M12 11V7a3 3 0 0 1 6 0v2" fill="none" stroke={W} strokeWidth="2" />
        </svg>
        <span className="ml-[14px] w-[640px] whitespace-nowrap">No objects selected. Click, Shift+click, Alt+scroll mouse on top of objects, or drag around objects to select.</span>
        <div className="ml-[549px] w-[20px] leading-[20px]">X:<br />Y:</div>
        <div className="w-[48px] text-right leading-[20px]">302.90<br />125.44</div>
        <div className="ml-[13px] w-[17px]">Z:</div>
        <div className="flex h-[37px] w-[88px] items-center justify-between rounded-[5px] border border-[#2a2a2a] pl-[11px] pr-[2px]">
          <span>72%</span>
          <PlusMinus />
        </div>
        <div className="ml-[11px] w-[17px]">R:</div>
        <div className="flex h-[37px] w-[90px] items-center justify-between rounded-[5px] border border-[#2a2a2a] pl-[14px] pr-[2px]">
          <span>0.00°</span>
          <PlusMinus />
        </div>
      </div>
    </div>
  );
}
